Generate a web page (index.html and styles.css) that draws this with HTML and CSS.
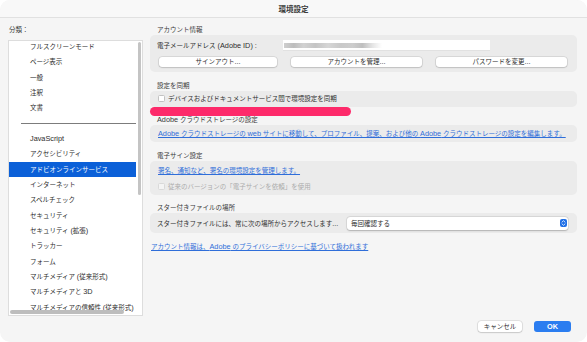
FILE: index.html
```html
<!DOCTYPE html>
<html lang="ja">
<head>
<meta charset="utf-8">
<title>環境設定</title>
<link rel="stylesheet" href="styles.css">
</head>
<body>
<div class="window">
  <div class="titlebar">環境設定</div>
  <div class="main">
    <div class="sidebar">
      <div class="cat-label">分類：</div>
      <div class="listbox">
        <ul class="list">
          <li>フルスクリーンモード</li>
          <li>ページ表示</li>
          <li>一般</li>
          <li>注釈</li>
          <li>文書</li>
          <li class="sep"></li>
          <li><span class="lat">JavaScript</span></li>
          <li>アクセシビリティ</li>
          <li class="selected">アドビオンラインサービス</li>
          <li>インターネット</li>
          <li>スペルチェック</li>
          <li>セキュリティ</li>
          <li>セキュリティ <span class="lat">(</span>拡張<span class="lat">)</span></li>
          <li>トラッカー</li>
          <li>フォーム</li>
          <li>マルチメディア <span class="lat">(</span>従来形式<span class="lat">)</span></li>
          <li>マルチメディアと <span class="lat">3D</span></li>
          <li>マルチメディアの信頼性 <span class="lat">(</span>従来形式<span class="lat">)</span></li>
        </ul>
        <div class="vscroll"></div>
        <div class="hscroll"></div>
      </div>
    </div>
    <div class="content">
      <div class="sec-label first">アカウント情報</div>
      <div class="group g-account">
        <div class="email-row">
          <span class="email-label">電子メールアドレス<span class="lat"> (Adobe ID) :</span></span>
          <div class="field"><span class="blurred"></span></div>
        </div>
        <div class="btn-row">
          <div class="btn w-signout">サインアウト<span class="lat">...</span></div>
          <div class="btn w-wide">アカウントを管理<span class="lat">...</span></div>
          <div class="btn w-wide">パスワードを変更<span class="lat">...</span></div>
        </div>
      </div>

      <div class="sec-label">設定を同期</div>
      <div class="group g-sync">
        <div class="check"><span class="box"></span>デバイスおよびドキュメントサービス間で環境設定を同期</div>
        <div class="highlight"></div>
      </div>

      <div class="sec-label"><span class="lat">Adobe</span> クラウドストレージの設定</div>
      <div class="group g-link">
        <a class="link" href="#"><span class="lat">Adobe</span> クラウドストレージの <span class="lat">web</span> サイトに移動して、プロファイル、提案、および他の <span class="lat">Adobe</span> クラウドストレージの設定を編集します。</a>
      </div>

      <div class="sec-label">電子サイン設定</div>
      <div class="group g-sign">
        <a class="link" href="#">署名、通知など、署名の環境設定を管理します。</a>
        <div class="check disabled"><span class="box"></span>従来のバージョンの「電子サインを依頼」を使用</div>
      </div>

      <div class="sec-label">スター付きファイルの場所</div>
      <div class="group g-star">
        <span class="star-text">スター付きファイルには、常に次の場所からアクセスします<span class="lat">...</span></span>
        <div class="select">
          <span>毎回確認する</span>
          <span class="stepper">
            <svg width="7" height="8" viewBox="0 0 7 8"><path d="M2 3.1 L3.5 1.7 L5 3.1" fill="none" stroke="#fff" stroke-width="0.8" stroke-linecap="round" stroke-linejoin="round"/><path d="M2 4.9 L3.5 6.3 L5 4.9" fill="none" stroke="#fff" stroke-width="0.8" stroke-linecap="round" stroke-linejoin="round"/></svg>
          </span>
        </div>
      </div>

      <a class="link privacy" href="#">アカウント情報は、<span class="lat">Adobe</span> のプライバシーポリシーに基づいて扱われます</a>
    </div>
  </div>
  <div class="footer">
    <div class="fbtn cancel">キャンセル</div>
    <div class="fbtn ok"><span class="lat">OK</span></div>
  </div>
</div>
</body>
</html>
```
FILE: styles.css
```css
* { box-sizing: border-box; margin: 0; padding: 0; }

html, body {
  width: 587px;
  height: 342px;
  background: #ffffff;
  overflow: hidden;
}

body {
  font-family: "Liberation Sans", "Noto Sans CJK JP", sans-serif;
  font-size: 6.5px;
  color: #2e2e2e;
}

.lat {
  font-size: 7.3px;
}

.window {
  width: 587px;
  height: 342px;
  background: #f5f5f5;
  border-radius: 10px;
  overflow: hidden;
  display: flex;
  flex-direction: column;
}

.titlebar {
  height: 18px;
  flex: none;
  background: #f8f8f8;
  border-bottom: 1px solid #e1e1e1;
  display: flex;
  align-items: center;
  justify-content: center;
  font-size: 7.5px;
  font-weight: 700;
  color: #3a3a3a;
}

.main {
  flex: 1;
  min-height: 0;
  display: flex;
  gap: 7px;
  padding: 7px 10px 0 8px;
}

/* sidebar */
.sidebar {
  width: 135px;
  flex: none;
  display: flex;
  flex-direction: column;
  gap: 5px;
}

.cat-label {
  height: 10px;
  line-height: 10px;
  padding-left: 1px;
  color: #3c3c3c;
}

.listbox {
  flex: 1;
  position: relative;
  background: #ffffff;
  border: 1px solid #dddddd;
  overflow: hidden;
}

.list {
  list-style: none;
  margin: -2px 6px 0 0;
}

.list li {
  height: 15.33px;
  line-height: 15.33px;
  padding-left: 21px;
  white-space: nowrap;
  color: #2c2c2c;
}

.list li.selected {
  background: #0b60d8;
  color: #ffffff;
}

.list li.sep { position: relative; }

.list li.sep::after {
  content: "";
  position: absolute;
  left: 12px;
  right: 0;
  top: 7px;
  height: 1px;
  background: #7c7c7c;
}

.vscroll {
  position: absolute;
  right: 1.3px;
  top: 1px;
  width: 3px;
  height: 153px;
  border-radius: 2px;
  background: #c4c4c4;
}

.hscroll {
  position: absolute;
  left: 1px;
  bottom: 1px;
  width: 114px;
  height: 4px;
  border-radius: 2px;
  background: #bdbdbd;
}

/* content */
.content {
  width: 427px;
  flex: none;
  display: flex;
  flex-direction: column;
}

.sec-label {
  height: 10px;
  line-height: 10px;
  padding-left: 7px;
  margin-top: 8.5px;
  color: #3a3a3a;
  white-space: nowrap;
}

.sec-label.first { margin-top: 0; }

.group {
  background: #ebebeb;
  border-radius: 5px;
}

.g-account {
  height: 37px;
  padding: 5px 0 5px 7px;
  display: flex;
  flex-direction: column;
  gap: 7px;
}

.email-row {
  display: flex;
  align-items: center;
  height: 10px;
}

.email-label {
  width: 126px;
  flex: none;
  white-space: nowrap;
}

.field {
  width: 207px;
  height: 10px;
  background: #ffffff;
  display: flex;
  align-items: center;
  padding-left: 1px;
  box-shadow: 0 0.5px 0 rgba(0,0,0,0.08);
}

.blurred {
  width: 98px;
  height: 5px;
  background: linear-gradient(90deg, #cfcfcf 0%, #bdbdbd 10%, #d2d2d2 20%, #c4c4c4 32%, #d6d6d6 45%, #c8c8c8 58%, #cdcdcd 70%, #bfbfbf 80%, #e4e4e4 90%, #ffffff 100%);
  filter: blur(0.7px);
}

.btn-row {
  display: flex;
  gap: 14px;
  padding-left: 2px;
}

.btn {
  height: 10px;
  line-height: 10px;
  background: #ffffff;
  border-radius: 3px;
  text-align: center;
  white-space: nowrap;
  color: #2e2e2e;
  box-shadow: 0 0 0 0.5px rgba(0,0,0,0.12), 0 0.5px 1.5px rgba(0,0,0,0.22);
}

.w-signout { width: 118px; }
.w-wide { width: 131px; }

.g-sync {
  position: relative;
  height: 16px;
  padding: 4px 7px;
}

.check {
  display: flex;
  align-items: center;
  gap: 3px;
  height: 8px;
  line-height: 8px;
  white-space: nowrap;
}

.box {
  width: 7px;
  height: 7px;
  flex: none;
  background: #ffffff;
  border: 0.5px solid #c2c2c2;
  border-radius: 1.5px;
  margin-left: 1px;
}

.highlight {
  position: absolute;
  left: 0;
  top: 16px;
  width: 201px;
  height: 9.5px;
  border-radius: 5px;
  background: #fd2a6a;
}

.link {
  display: block;
  color: #2f6ed9;
  text-decoration: underline;
  line-height: 9px;
  white-space: nowrap;
}

.g-link {
  height: 17px;
  padding: 4px 8px;
}

.g-sign {
  height: 34px;
  padding: 5px 7px 4px 8px;
}

.check.disabled {
  margin-top: 8px;
  margin-left: -1px;
  color: #ababab;
}

.check.disabled .box {
  background: #f4f4f4;
  border-color: #d9d9d9;
}

.g-star {
  height: 20px;
  padding: 3.5px 9px 3.5px 7px;
  display: flex;
  align-items: center;
}

.star-text {
  flex: 1;
  white-space: nowrap;
}

.select {
  width: 221px;
  height: 13px;
  background: #ffffff;
  border-radius: 3px;
  display: flex;
  align-items: center;
  justify-content: space-between;
  padding: 0 1px 0 4px;
  box-shadow: 0 0 0 0.5px rgba(0,0,0,0.1), 0 0.5px 1.5px rgba(0,0,0,0.2);
}

.stepper {
  width: 7px;
  height: 8px;
  border-radius: 2px;
  background: #1f6fe6;
  display: flex;
}

.privacy {
  margin-top: 9px;
  padding-left: 1px;
}

/* footer */
.footer {
  height: 26px;
  flex: none;
  display: flex;
  justify-content: flex-end;
  gap: 12px;
  padding: 5px 16px 0 0;
}

.fbtn {
  height: 11px;
  line-height: 11px;
  border-radius: 3px;
  text-align: center;
}

.cancel {
  width: 44px;
  background: #ffffff;
  color: #2e2e2e;
  box-shadow: 0 0 0 0.5px rgba(0,0,0,0.12), 0 0.5px 1.5px rgba(0,0,0,0.22);
}

.ok {
  width: 37px;
  background: #2b7df0;
  color: #ffffff;
  font-weight: 700;
}
```
